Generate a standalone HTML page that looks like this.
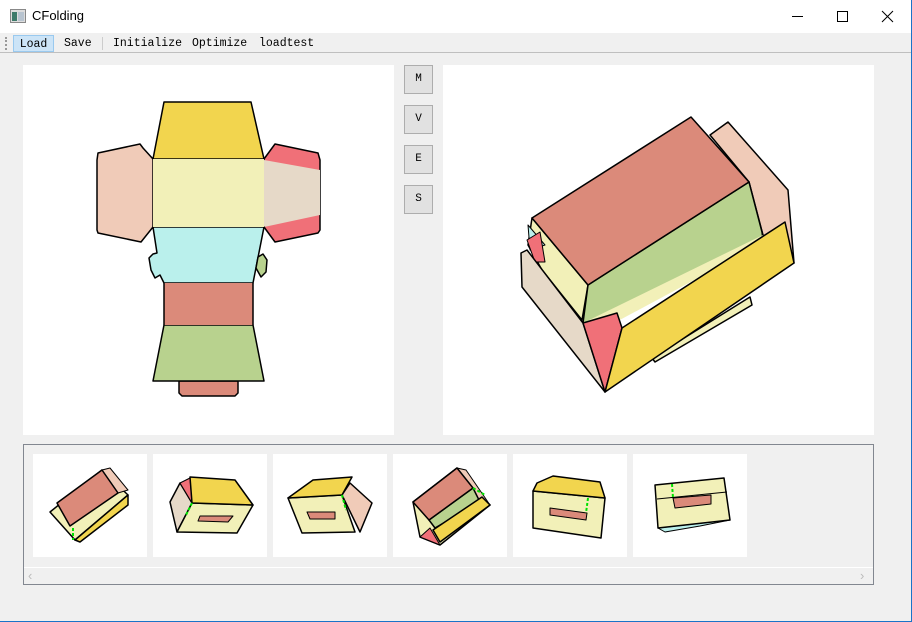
<!DOCTYPE html>
<html><head><meta charset="utf-8"><style>
*{margin:0;padding:0;box-sizing:border-box}
body{width:912px;height:622px;background:#f0f0f0;position:relative;overflow:hidden;font-family:"Liberation Sans",sans-serif}
.title{position:absolute;left:0;top:0;width:912px;height:33px;background:#fff}
.title .t{position:absolute;left:32px;top:8px;font-size:13px;color:#000}
.menu{position:absolute;left:0;top:33px;width:912px;height:20px;background:#f0f0f0;border-bottom:1px solid #bfbfbf;font-family:"Liberation Mono","DejaVu Sans Mono",monospace;font-size:11.5px}
.menu span{position:absolute;top:2px;height:17px;line-height:17px}
.abs{position:absolute}
.btn{position:absolute;left:404px;width:29px;height:29px;background:#e1e1e1;border:1px solid #adadad;font-family:"Liberation Mono",monospace;font-size:11px;text-align:center;line-height:27px}
.th{position:absolute;top:454px;width:114px;height:103px;background:#fff}
</style></head><body>
<div class="title">
 <svg class="abs" style="left:10px;top:9px" width="16" height="14"><rect x="0.5" y="0.5" width="15" height="13" fill="#ddd" stroke="#888"/><rect x="2" y="3" width="5" height="9" fill="#3d7a6a"/><rect x="8" y="3" width="6" height="9" fill="#b8c4d0"/></svg>
 <div class="t">CFolding</div>
 <svg class="abs" style="left:780px;top:0" width="132" height="33"><line x1="12" y1="16.5" x2="23" y2="16.5" stroke="#000"/><rect x="57.5" y="11.5" width="10" height="10" fill="none" stroke="#000"/><path d="M102 11L113 22M113 11L102 22" stroke="#000"/></svg>
</div>
<div class="menu">
 <div class="abs" style="left:5px;top:4px;width:2px;height:13px;border-left:2px dotted #999"></div>
 <span style="left:13px;width:41px;background:#cce4f7;border:1px solid #99c9ef;text-align:center">Load</span>
 <span style="left:64px">Save</span>
 <div class="abs" style="left:102px;top:4px;width:1px;height:13px;background:#ccc"></div>
 <span style="left:113px">Initialize</span>
 <span style="left:192px">Optimize</span>
 <span style="left:259px">loadtest</span>
</div>

<div class="abs" style="left:23px;top:65px;width:371px;height:370px;background:#fff"></div>
<div class="abs" style="left:443px;top:65px;width:431px;height:370px;background:#fff"></div>
<div class="abs" style="left:23px;top:444px;width:851px;height:141px;border:1px solid #828790"></div>
<div class="th" style="left:33px"></div><div class="th" style="left:153px"></div><div class="th" style="left:273px"></div><div class="th" style="left:393px"></div><div class="th" style="left:513px"></div><div class="th" style="left:633px"></div>
<div class="abs" style="left:24px;top:567px;width:849px;height:1px;background:#fff"></div>
<div class="abs" style="left:28px;top:568px;color:#bbb;font-size:13px">&#8249;</div>
<div class="abs" style="left:860px;top:568px;color:#bbb;font-size:13px">&#8250;</div>

<svg class="abs" style="left:0;top:0" width="912" height="622">
<g stroke="#000" stroke-width="1.5" stroke-linejoin="round">
 <polygon points="153,159 143,148 140,144 98,153 97,160 97,230 98,233 141,242 153,227" fill="#f0cbb8"/>
 <polygon points="264,159 275,144 318,153 320,160 320,230 318,233 275,242 264,227" fill="#f07078"/>
 <polygon points="264,160 320,170 320,215 264,227" fill="#e6d9c8" stroke="none"/>
 <polygon points="164,102 251,102 264,159 153,159" fill="#f2d54e"/>
 <polygon points="153,227 264,227 253,283 164,283 160,275 155,278 151,270 149,258 153,254 157,253" fill="#baf0ec"/>
 <polygon points="258,257 263,254 267,260 266,272 261,277 256,268" fill="#b8d28e"/>
 <polygon points="179,381 238,381 238,393 235,396 182,396 179,393" fill="#db8a7a"/>
 <polygon points="164,325 253,325 264,381 153,381" fill="#b8d28e"/>
 <rect x="164" y="283" width="89" height="42" fill="#db8a7a" stroke="none"/>
 <line x1="164" y1="283" x2="164" y2="325"/><line x1="253" y1="283" x2="253" y2="325"/>
 <polygon points="153,159 264,159 264,227 153,227" fill="#f2f0b8" stroke="none"/>
 <!-- 3D -->
 <polygon points="710,135 728,122 788,190 794,263 763,235 749,182" fill="#f0cbb8"/>
 <polygon points="652,358 750,297 752,305 655,362" fill="#f2f0b8"/>
 <polygon points="532,218 588,285 582,320 542,270 528,245" fill="#f2f0b8"/>
 <polygon points="528,225 545,245 530,250" fill="#baf0ec" stroke-width="1"/>
 <polygon points="527,240 540,232 545,262 535,262" fill="#f07078" stroke-width="1"/>
 <polygon points="588,285 749,182 762,232 763,240 590,330 583,323" fill="#b8d28e"/>
 <polygon points="583,323 763,235 765,242 590,336" fill="#f2f0b8" stroke="none"/>
 <polygon points="521,253 527,250 583,323 605,392 522,287" fill="#e6d9c8"/>
 <polygon points="583,323 617,313 622,328 605,392" fill="#f07078"/>
 <polygon points="622,328 785,222 794,263 605,392" fill="#f2d54e"/>
 <polygon points="532,218 691,117 749,182 588,285" fill="#db8a7a"/>
 <!-- thumbnails -->
 <polygon points="50,512 102,470 128,495 75,540" fill="#f2f0b8"/>
 <polygon points="75,540 128,495 128,505 80,542" fill="#f2d54e"/>
 <polygon points="102,470 110,468 128,490 118,493" fill="#f0cbb8" stroke-width="1"/>
 <polygon points="57,503 102,470 118,493 70,526" fill="#db8a7a"/>
 <polygon points="170,502 180,483 192,503 177,532" fill="#e6d9c8"/>
 <polygon points="180,483 190,478 192,503" fill="#f07078" stroke-width="1"/>
 <polygon points="192,503 253,505 237,533 177,532" fill="#f2f0b8"/>
 <polygon points="190,477 235,480 253,505 192,503" fill="#f2d54e"/>
 <polygon points="200,516 233,516 228,522 198,521" fill="#db8a7a" stroke-width="1"/>
 <polygon points="288,498 342,495 355,532 302,533" fill="#f2f0b8"/>
 <polygon points="342,495 350,483 372,503 360,532" fill="#f0cbb8"/>
 <polygon points="288,498 313,480 352,477 342,495" fill="#f2d54e"/>
 <polygon points="307,512 335,512 335,519 310,519" fill="#db8a7a" stroke-width="1"/>
 <polygon points="413,502 457,468 473,488 490,505 440,545 420,537" fill="#f2f0b8"/>
 <polygon points="457,468 466,470 490,505 480,502" fill="#f0cbb8" stroke-width="1"/>
 <polygon points="429,520 473,488 480,502 435,528" fill="#b8d28e"/>
 <polygon points="440,542 490,505 482,497 433,530" fill="#f2d54e"/>
 <polygon points="430,528 440,545 420,537" fill="#f07078" stroke-width="1"/>
 <polygon points="413,502 457,468 473,488 429,520" fill="#db8a7a"/>
 <polygon points="533,491 605,498 601,538 533,528" fill="#f2f0b8"/>
 <polygon points="537,483 553,476 600,482 605,498 533,491" fill="#f2d54e"/>
 <polygon points="550,508 587,513 586,520 550,515" fill="#db8a7a" stroke-width="1"/>
 <polygon points="658,528 730,520 700,526 665,532" fill="#baf0ec" stroke-width="1"/>
 <polygon points="655,485 724,478 730,520 658,528" fill="#f2f0b8"/>
 <line x1="657" y1="499" x2="727" y2="492" stroke-width="1"/>
 <polygon points="673,498 711,495 711,504 675,508" fill="#db8a7a" stroke-width="1"/>
</g>
<g stroke="#00e000" stroke-width="2" stroke-dasharray="3,2">
 <line x1="73" y1="528" x2="73" y2="540"/><line x1="192" y1="503" x2="186" y2="515"/><line x1="342" y1="495" x2="346" y2="510"/>
 <line x1="473" y1="488" x2="485" y2="495"/><line x1="588" y1="498" x2="586" y2="513"/><line x1="672" y1="484" x2="673" y2="498"/>
</g>
</svg>

<div class="btn" style="top:65px">M</div>
<div class="btn" style="top:105px">V</div>
<div class="btn" style="top:145px">E</div>
<div class="btn" style="top:185px">S</div>

<div class="abs" style="right:0;top:0;width:1px;height:622px;background:#1a73c8"></div>
<div class="abs" style="left:0;bottom:0;width:912px;height:1px;background:#1a73c8"></div>
</body></html>
